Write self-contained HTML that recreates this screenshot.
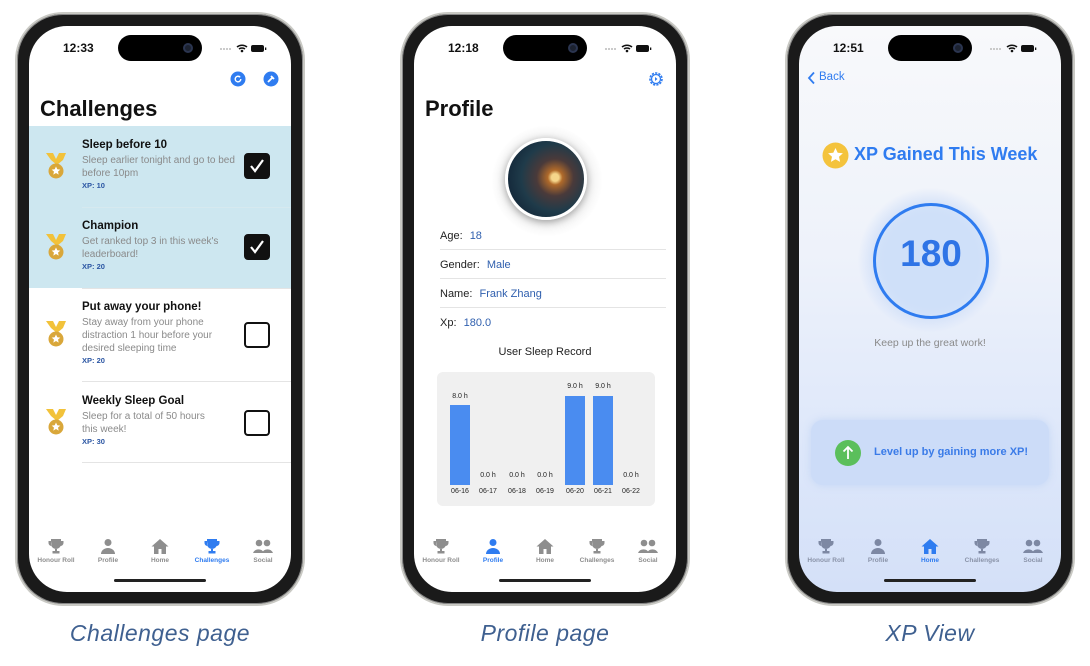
<!DOCTYPE html>
<html><head><meta charset="utf-8"><style>
*{margin:0;padding:0;box-sizing:border-box}
body{width:1090px;height:666px;background:#fff;position:relative;overflow:hidden;font-family:"Liberation Sans",sans-serif}
.ph{position:absolute;top:12px;width:290px;height:594px;border-radius:48px;background:#1a1a1a;border:2px solid #c9c9c4;box-shadow:0 0 0 1px #888 inset}
.scr{position:absolute;left:12px;top:12px;width:262px;height:566px;border-radius:38px;background:#fff;overflow:hidden}
.a{position:absolute}
.time{left:34px;top:15px;font-size:12px;font-weight:bold;color:#111}
.isl{left:89px;top:9px;width:84px;height:26px;border-radius:13px;background:#000}
.cam{left:154px;top:17px;width:10px;height:10px;border-radius:5px;background:#1c2230;border:2px solid #2b3550}
.stat{left:189px;top:17px}
.tab{top:512px;width:52px;text-align:center;font-size:6.5px;color:#8e8e8e;font-weight:bold}
.tab svg{display:block;margin:0 auto 3px}
.home{left:85px;top:553px;width:92px;height:3px;border-radius:2px;background:#222}
.cap{position:absolute;top:620px;width:290px;text-align:center;font-style:italic;font-size:23px;color:#3f6090;letter-spacing:0.5px}
.row .t{font-size:11.5px;font-weight:bold;color:#111}
.row .d{font-size:10px;color:#8a8a8a;line-height:13px;margin-top:3px}
.row .x{font-size:7.5px;font-weight:bold;color:#2b56a3;margin-top:1px}
.cb{width:26px;height:26px;border-radius:4px;border:2px solid #111}
.pl{font-size:11px;color:#222}
.pl b{font-weight:normal;color:#2f5fae;margin-left:4px}
.sep{height:1px;background:#e4e4e4}
.bar{width:20px;background:#4a8cf0}
.bl{font-size:7px;color:#222;width:30px;text-align:center}
</style></head><body>

<!-- PHONE 1 -->
<div class="ph" style="left:15px">
<div class="scr">
 <div class="a time">12:33</div>
 <div class="a isl"></div><div class="a cam"></div>
 <svg class="a stat" width="50" height="10"><g fill="#bbb"><circle cx="3" cy="6" r="1"/><circle cx="6" cy="6" r="1"/><circle cx="9" cy="6" r="1"/><circle cx="12" cy="6" r="1"/></g><path d="M19 4a8 8 0 0 1 10 0M21 6a5 5 0 0 1 6 0" stroke="#111" stroke-width="1.6" fill="none"/><circle cx="24" cy="8" r="1.3" fill="#111"/><rect x="33" y="2" width="13" height="7" rx="2" fill="#111"/><rect x="47" y="4.5" width="1.3" height="2.5" fill="#111"/></svg>
 <svg class="a" style="left:201px;top:45px" width="16" height="16"><circle cx="8" cy="8" r="7.5" fill="#2f7cf0"/><path d="M10.8 8a2.8 2.8 0 1 1-1-2.1" stroke="#fff" stroke-width="1.4" fill="none"/><path d="M9 4.5l1.8 1.5-2 .8z" fill="#fff"/></svg>
 <svg class="a" style="left:234px;top:45px" width="16" height="16"><circle cx="8" cy="8" r="7.5" fill="#2f7cf0"/><path d="M5 11l4.5-4.5M8 5l3 3" stroke="#fff" stroke-width="1.8" fill="none"/></svg>
 <div class="a" style="left:11px;top:70px;font-size:22px;font-weight:bold;color:#111">Challenges</div>
 <div class="a" style="left:0;top:100px;width:262px;height:162px;background:#cde7f0"></div>
 <div class="a sep" style="left:53px;top:181px;width:209px;background:#d6e9ef"></div>
 <div class="a sep" style="left:53px;top:262px;width:209px"></div>
 <div class="a sep" style="left:53px;top:355px;width:209px"></div>
 <div class="a sep" style="left:53px;top:436px;width:209px"></div>
 <div class="a row" style="left:53px;top:113px;width:160px"><div class="t">Sleep before 10</div><div class="d">Sleep earlier tonight and go to bed before 10pm</div><div class="x">XP: 10</div></div>
 <div class="a row" style="left:53px;top:194px;width:160px"><div class="t">Champion</div><div class="d">Get ranked top 3 in this week's leaderboard!</div><div class="x">XP: 20</div></div>
 <div class="a row" style="left:53px;top:275px;width:150px"><div class="t">Put away your phone!</div><div class="d">Stay away from your phone distraction 1 hour before your desired sleeping time</div><div class="x">XP: 20</div></div>
 <div class="a row" style="left:53px;top:369px;width:140px"><div class="t">Weekly Sleep Goal</div><div class="d">Sleep for a total of 50 hours this week!</div><div class="x">XP: 30</div></div>
 <svg class="a" style="left:15px;top:127px" width="24" height="28"><g id="md"><path d="M2 0h7l3 6 3-6h7l-3 7-6 5-6-5z" fill="#f2c23a"/><circle cx="12" cy="18" r="7.5" fill="#d9a73a"/><path d="M12 13.5l1.3 2.8 3 .3-2.3 2 .7 3-2.7-1.6-2.7 1.6.7-3-2.3-2 3-.3z" fill="#fff"/></g></svg>
 <svg class="a" style="left:15px;top:208px" width="24" height="28"><use href="#md"/></svg>
 <svg class="a" style="left:15px;top:295px" width="24" height="28"><use href="#md"/></svg>
 <svg class="a" style="left:15px;top:383px" width="24" height="28"><use href="#md"/></svg>
 <div class="a cb" style="left:215px;top:127px;background:#111"><svg width="22" height="22"><path d="M5 11l4 5 8-11" stroke="#fff" stroke-width="2.2" fill="none"/></svg></div>
 <div class="a cb" style="left:215px;top:208px;background:#111"><svg width="22" height="22"><path d="M5 11l4 5 8-11" stroke="#fff" stroke-width="2.2" fill="none"/></svg></div>
 <div class="a cb" style="left:215px;top:296px"></div>
 <div class="a cb" style="left:215px;top:384px"></div>
 <div class="a tab" style="left:1px"><svg width="16" height="16"><path d="M3 1h10v5a5 5 0 0 1-10 0zM3 3H0.5v2a3 3 0 0 0 3 3M13 3h2.5v2a3 3 0 0 1-3 3M7 11h2v2h2.5v2.5h-7V13H7z" fill="#8e8e8e"/></svg>Honour Roll</div>
 <div class="a tab" style="left:53px"><svg width="16" height="16"><circle cx="8" cy="4.5" r="3.5" fill="#8e8e8e"/><path d="M1 16a7 6 0 0 1 14 0z" fill="#8e8e8e"/></svg>Profile</div>
 <div class="a tab" style="left:105px"><svg width="18" height="16"><path d="M9 1L0.5 8.5h2.5V16h4.5v-5h3v5h4.5V8.5h2.5z" fill="#8e8e8e"/></svg>Home</div>
 <div class="a tab" style="left:157px;color:#2f7cf0"><svg width="16" height="16"><path d="M3 1h10v5a5 5 0 0 1-10 0zM3 3H0.5v2a3 3 0 0 0 3 3M13 3h2.5v2a3 3 0 0 1-3 3M7 11h2v2h2.5v2.5h-7V13H7z" fill="#2f7cf0"/></svg>Challenges</div>
 <div class="a tab" style="left:208px"><svg width="20" height="16"><circle cx="6" cy="5" r="3.3" fill="#8e8e8e"/><circle cx="14" cy="5" r="3.3" fill="#8e8e8e"/><path d="M0 15a6 6 0 0 1 11 0zM9 15a6 6 0 0 1 11 0z" fill="#8e8e8e"/></svg>Social</div>
 <div class="a home"></div>
</div></div>
<div class="cap" style="left:15px">Challenges page</div>

<!-- PHONE 2 -->
<div class="ph" style="left:400px">
<div class="scr">
 <div class="a time">12:18</div>
 <div class="a isl"></div><div class="a cam"></div>
 <svg class="a stat" width="50" height="10"><g fill="#bbb"><circle cx="3" cy="6" r="1"/><circle cx="6" cy="6" r="1"/><circle cx="9" cy="6" r="1"/><circle cx="12" cy="6" r="1"/></g><path d="M19 4a8 8 0 0 1 10 0M21 6a5 5 0 0 1 6 0" stroke="#111" stroke-width="1.6" fill="none"/><circle cx="24" cy="8" r="1.3" fill="#111"/><rect x="33" y="2" width="13" height="7" rx="2" fill="#111"/><rect x="47" y="4.5" width="1.3" height="2.5" fill="#111"/></svg>
 <svg class="a" style="left:234px;top:45px" width="16" height="16"><circle cx="8" cy="8" r="6" stroke="#2f7cf0" stroke-width="1.6" fill="none" stroke-dasharray="2.2 1.2"/><circle cx="8" cy="8" r="4.5" stroke="#2f7cf0" stroke-width="1.3" fill="none"/><path d="M7 6l2.5 2L7 10z" fill="#2f7cf0"/></svg>
 <div class="a" style="left:11px;top:70px;font-size:22px;font-weight:bold;color:#111">Profile</div>
 <div class="a" style="left:78px;top:100px;width:110px;height:110px;border-radius:55px;background:radial-gradient(circle,#e8e8e8 40%,#fff 72%)"></div>
 <div class="a" style="left:91px;top:112px;width:82px;height:82px;border-radius:41px;border:3px solid #fff;box-shadow:0 2px 8px rgba(0,0,0,.35);background:radial-gradient(circle at 62% 48%,#f5d58a 0 6%,#b06a2a 12%,#4a3a3a 30%,#1f3b4a 55%,#14283a 80%)"></div>
 <div class="a pl" style="left:26px;top:204px">Age: <b>18</b></div>
 <div class="a sep" style="left:26px;top:223px;width:226px"></div>
 <div class="a pl" style="left:26px;top:233px">Gender: <b>Male</b></div>
 <div class="a sep" style="left:26px;top:252px;width:226px"></div>
 <div class="a pl" style="left:26px;top:262px">Name: <b>Frank Zhang</b></div>
 <div class="a sep" style="left:26px;top:281px;width:226px"></div>
 <div class="a pl" style="left:26px;top:291px">Xp: <b>180.0</b></div>
 <div class="a" style="left:0;top:320px;width:262px;text-align:center;font-size:11px;color:#222">User Sleep Record</div>
 <div class="a" style="left:23px;top:346px;width:218px;height:134px;border-radius:6px;background:#f0f0f0"></div>
 <div class="a bar" style="left:36px;top:379px;height:80px"></div>
 <div class="a bar" style="left:151px;top:370px;height:89px"></div>
 <div class="a bar" style="left:179px;top:370px;height:89px"></div>
 <div class="a bl" style="left:31px;top:367px">8.0 h</div>
 <div class="a bl" style="left:59px;top:446px">0.0 h</div>
 <div class="a bl" style="left:88px;top:446px">0.0 h</div>
 <div class="a bl" style="left:116px;top:446px">0.0 h</div>
 <div class="a bl" style="left:146px;top:357px">9.0 h</div>
 <div class="a bl" style="left:174px;top:357px">9.0 h</div>
 <div class="a bl" style="left:202px;top:446px">0.0 h</div>
 <div class="a bl" style="left:31px;top:462px">06-16</div>
 <div class="a bl" style="left:59px;top:462px">06-17</div>
 <div class="a bl" style="left:88px;top:462px">06-18</div>
 <div class="a bl" style="left:116px;top:462px">06-19</div>
 <div class="a bl" style="left:146px;top:462px">06-20</div>
 <div class="a bl" style="left:174px;top:462px">06-21</div>
 <div class="a bl" style="left:202px;top:462px">06-22</div>
 <div class="a tab" style="left:1px"><svg width="16" height="16"><path d="M3 1h10v5a5 5 0 0 1-10 0zM3 3H0.5v2a3 3 0 0 0 3 3M13 3h2.5v2a3 3 0 0 1-3 3M7 11h2v2h2.5v2.5h-7V13H7z" fill="#8e8e8e"/></svg>Honour Roll</div>
 <div class="a tab" style="left:53px;color:#2f7cf0"><svg width="16" height="16"><circle cx="8" cy="4.5" r="3.5" fill="#2f7cf0"/><path d="M1 16a7 6 0 0 1 14 0z" fill="#2f7cf0"/></svg>Profile</div>
 <div class="a tab" style="left:105px"><svg width="18" height="16"><path d="M9 1L0.5 8.5h2.5V16h4.5v-5h3v5h4.5V8.5h2.5z" fill="#8e8e8e"/></svg>Home</div>
 <div class="a tab" style="left:157px"><svg width="16" height="16"><path d="M3 1h10v5a5 5 0 0 1-10 0zM3 3H0.5v2a3 3 0 0 0 3 3M13 3h2.5v2a3 3 0 0 1-3 3M7 11h2v2h2.5v2.5h-7V13H7z" fill="#8e8e8e"/></svg>Challenges</div>
 <div class="a tab" style="left:208px"><svg width="20" height="16"><circle cx="6" cy="5" r="3.3" fill="#8e8e8e"/><circle cx="14" cy="5" r="3.3" fill="#8e8e8e"/><path d="M0 15a6 6 0 0 1 11 0zM9 15a6 6 0 0 1 11 0z" fill="#8e8e8e"/></svg>Social</div>
 <div class="a home"></div>
</div></div>
<div class="cap" style="left:400px">Profile page</div>

<!-- PHONE 3 -->
<div class="ph" style="left:785px">
<div class="scr" style="background:linear-gradient(#f8f9fb 0%,#eef2fa 40%,#dde7fa 75%,#d4e0f8 100%)">
 <div class="a time">12:51</div>
 <div class="a isl"></div><div class="a cam"></div>
 <svg class="a stat" width="50" height="10"><g fill="#bbb"><circle cx="3" cy="6" r="1"/><circle cx="6" cy="6" r="1"/><circle cx="9" cy="6" r="1"/><circle cx="12" cy="6" r="1"/></g><path d="M19 4a8 8 0 0 1 10 0M21 6a5 5 0 0 1 6 0" stroke="#111" stroke-width="1.6" fill="none"/><circle cx="24" cy="8" r="1.3" fill="#111"/><rect x="33" y="2" width="13" height="7" rx="2" fill="#111"/><rect x="47" y="4.5" width="1.3" height="2.5" fill="#111"/></svg>
 <svg class="a" style="left:8px;top:45px" width="10" height="14"><path d="M7 1.5L2 7l5 5.5" stroke="#2f7cf0" stroke-width="1.8" fill="none"/></svg>
 <div class="a" style="left:20px;top:45px;font-size:11.5px;color:#2f7cf0">Back</div>
 <svg class="a" style="left:23px;top:116px" width="27" height="27"><circle cx="13.5" cy="13.5" r="13" fill="#f4c33c"/><path d="M13.5 6l2.2 4.8 5.2.5-3.9 3.5 1.1 5.1-4.6-2.7-4.6 2.7 1.1-5.1-3.9-3.5 5.2-.5z" fill="#fff"/></svg>
 <div class="a" style="left:55px;top:118px;font-size:18px;font-weight:bold;color:#2f7cf0">XP Gained This Week</div>
 <div class="a" style="left:58px;top:161px;width:146px;height:146px;border-radius:73px;background:radial-gradient(circle,rgba(200,218,248,.8) 50%,rgba(230,238,252,0) 70%)"></div>
 <div class="a" style="left:74px;top:177px;width:116px;height:116px;border-radius:58px;border:3px solid #2f7cf0;background:radial-gradient(circle,#cfe0f9 60%,#dbe7fb 100%)"></div>
 <div class="a" style="left:74px;top:207px;width:116px;text-align:center;font-size:37px;font-weight:bold;color:#2f74e6">180</div>
 <div class="a" style="left:0;top:311px;width:262px;text-align:center;font-size:10.5px;color:#8a8a8a">Keep up the great work!</div>
 <div class="a" style="left:12px;top:394px;width:238px;height:65px;border-radius:12px;background:#ccdcf8;box-shadow:0 0 8px rgba(190,210,245,.8)"></div>
 <svg class="a" style="left:36px;top:414px" width="26" height="26"><circle cx="13" cy="13" r="13" fill="#5bbf5b"/><path d="M13 19V7M8.5 11.5L13 7l4.5 4.5" stroke="#fff" stroke-width="1.8" fill="none"/></svg>
 <div class="a" style="left:75px;top:420px;font-size:11px;font-weight:bold;color:#3a7be8">Level up by gaining more XP!</div>
 <div class="a tab" style="left:1px;color:#8a93a8"><svg width="16" height="16"><path d="M3 1h10v5a5 5 0 0 1-10 0zM3 3H0.5v2a3 3 0 0 0 3 3M13 3h2.5v2a3 3 0 0 1-3 3M7 11h2v2h2.5v2.5h-7V13H7z" fill="#7d88a3"/></svg>Honour Roll</div>
 <div class="a tab" style="left:53px;color:#8a93a8"><svg width="16" height="16"><circle cx="8" cy="4.5" r="3.5" fill="#7d88a3"/><path d="M1 16a7 6 0 0 1 14 0z" fill="#7d88a3"/></svg>Profile</div>
 <div class="a tab" style="left:105px;color:#2f7cf0"><svg width="18" height="16"><path d="M9 1L0.5 8.5h2.5V16h4.5v-5h3v5h4.5V8.5h2.5z" fill="#2f7cf0"/></svg>Home</div>
 <div class="a tab" style="left:157px;color:#8a93a8"><svg width="16" height="16"><path d="M3 1h10v5a5 5 0 0 1-10 0zM3 3H0.5v2a3 3 0 0 0 3 3M13 3h2.5v2a3 3 0 0 1-3 3M7 11h2v2h2.5v2.5h-7V13H7z" fill="#7d88a3"/></svg>Challenges</div>
 <div class="a tab" style="left:208px;color:#8a93a8"><svg width="20" height="16"><circle cx="6" cy="5" r="3.3" fill="#7d88a3"/><circle cx="14" cy="5" r="3.3" fill="#7d88a3"/><path d="M0 15a6 6 0 0 1 11 0zM9 15a6 6 0 0 1 11 0z" fill="#7d88a3"/></svg>Social</div>
 <div class="a home"></div>
</div></div>
<div class="cap" style="left:785px">XP View</div>
</body></html>
